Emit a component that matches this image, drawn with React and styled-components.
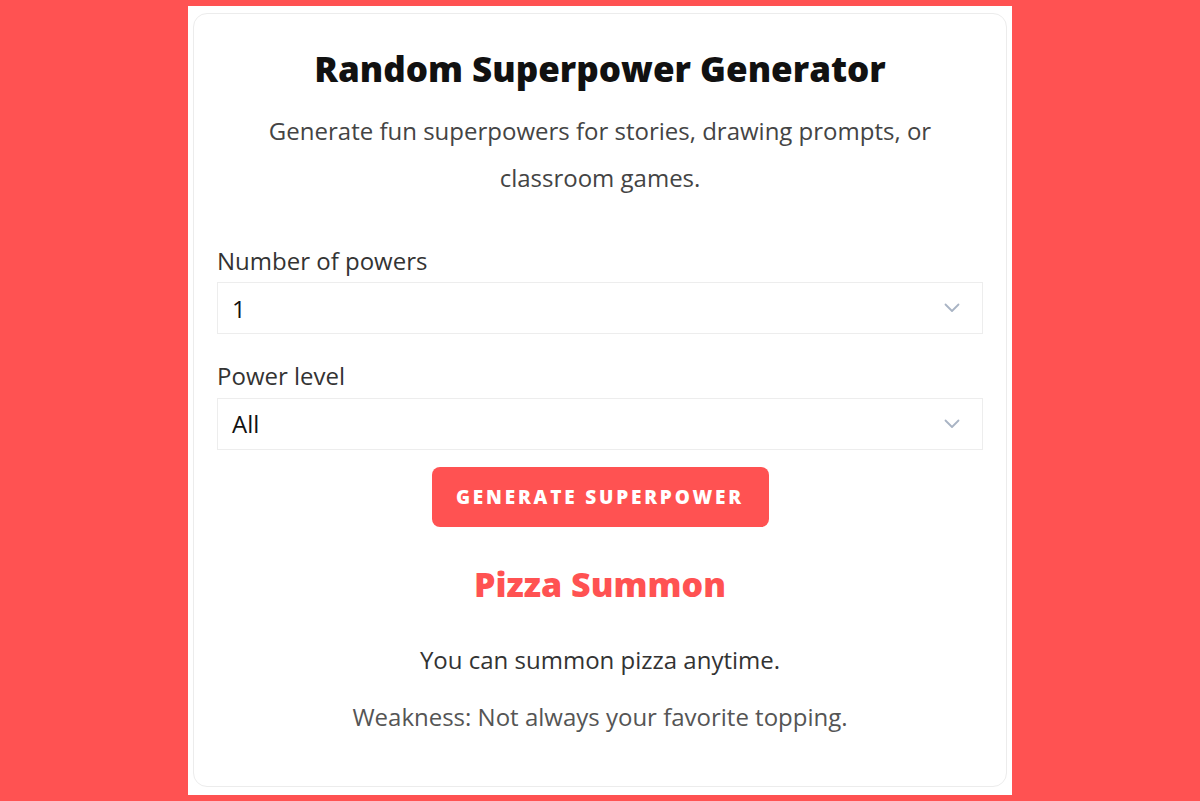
import React from 'react'
import styled, { createGlobalStyle } from 'styled-components';

const Global = createGlobalStyle`
  html, body {
    margin: 0;
    padding: 0;
    background: #ff5252;
    font-family: "Open Sans", "Noto Sans", sans-serif;
  }
  * { box-sizing: border-box; }
`;

function Chevron() {
  return (
    <svg width="16" height="10" viewBox="0 0 16 10" fill="none">
      <path d="M1.5 1.5 L8 8 L14.5 1.5" stroke="#a9b4c4" strokeWidth="1.8" strokeLinecap="round" strokeLinejoin="round"/>
    </svg>
  )
}

function Select({ value }) {
  return (
    <SelectBox>
      <span>{value}</span>
      <Chevron />
    </SelectBox>
  )
}

export default function App() {
  return (
    <Page>
      <Global />
      <Sheet>
        <Card>
          <Title>Random Superpower Generator</Title>
          <Intro>Generate fun superpowers for stories, drawing prompts, or classroom games.</Intro>
          <Field>
            <Label>Number of powers</Label>
            <Select value="1" />
          </Field>
          <Field>
            <Label>Power level</Label>
            <Select value="All" />
          </Field>
          <ButtonRow>
            <Button>Generate Superpower</Button>
          </ButtonRow>
          <Result>
            <PowerName>Pizza Summon</PowerName>
            <PowerText>You can summon pizza anytime.</PowerText>
            <Weakness>Weakness: Not always your favorite topping.</Weakness>
          </Result>
        </Card>
      </Sheet>
    </Page>
  )
}

const Page = styled.div`
  min-height: 801px;
  display: flex;
  justify-content: center;
  padding: 6px 0;
`;
const Sheet = styled.div`
  width: 824px;
  height: 789px;
  background: #fff;
  padding: 7px 5px 8px 5px;
`;
const Card = styled.div`
  height: 100%;
  border: 1px solid #ececec;
  border-radius: 14px;
  padding: 32px 23px 0 23px;
  display: flex;
  flex-direction: column;
`;
const Title = styled.h1`
  margin: 0;
  text-align: center;
  font-size: 35px;
  font-weight: 800;
  color: #111;
  line-height: 1.3;
`;
const Intro = styled.p`
  margin: 15px auto 0;
  max-width: 700px;
  text-align: center;
  font-size: 24px;
  line-height: 47px;
  color: #444;
`;
const Field = styled.div`
  display: flex;
  flex-direction: column;
  margin-top: 43px;

  & + & {
    margin-top: 25px;
  }
`;
const Label = styled.label`
  font-size: 24px;
  color: #333;
  line-height: 1.4;
  margin-bottom: 5px;
`;
const SelectBox = styled.div`
  height: 52px;
  border: 1px solid #ededed;
  display: flex;
  align-items: center;
  justify-content: space-between;
  padding: 0 22px 0 14px;
  font-size: 24px;
  color: #111;
`;
const ButtonRow = styled.div`
  display: flex;
  justify-content: center;
  margin-top: 17px;
`;
const Button = styled.button`
  width: 337px;
  height: 60px;
  border: none;
  border-radius: 8px;
  background: #ff5252;
  color: #fff;
  font-family: "Open Sans", sans-serif;
  font-size: 19px;
  font-weight: 800;
  text-transform: uppercase;
  letter-spacing: 2.8px;
`;
const Result = styled.div`
  text-align: center;
  margin-top: 35px;
`;
const PowerName = styled.h2`
  margin: 0;
  font-size: 34px;
  font-weight: 800;
  color: #ff5252;
  line-height: 1.3;
`;
const PowerText = styled.p`
  margin: 36px 0 0;
  font-size: 24px;
  color: #333;
  line-height: 1.5;
`;
const Weakness = styled.p`
  margin: 21px 0 0;
  font-size: 24px;
  color: #555;
  line-height: 1.5;
`;
